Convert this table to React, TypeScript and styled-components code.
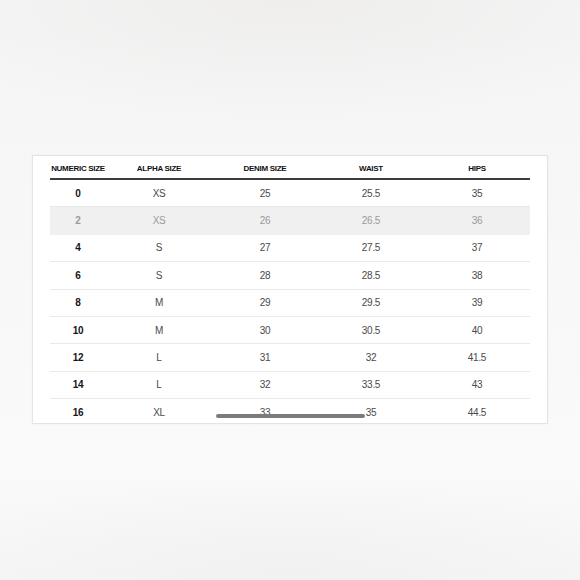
import styled, { createGlobalStyle } from "styled-components";

const GlobalStyle = createGlobalStyle`
    html, body {
        margin: 0;
        padding: 0;
    }
    body {
        font-family: "Liberation Sans", Arial, sans-serif;
        background: #f7f7f7;
    }
`;

const Page = styled.div`
    width: 580px;
    height: 580px;
    box-sizing: border-box;
    padding: 155px 0 0 32px;
    background:
        radial-gradient(ellipse 70% 22% at 50% 0%, #efeeed 0%, rgba(247, 247, 247, 0) 100%),
        radial-gradient(ellipse 70% 18% at 50% 100%, #f1f1f1 0%, rgba(250, 250, 250, 0) 100%),
        linear-gradient(180deg, #f5f5f5 0%, #f8f8f8 50%, #fafafa 80%, #f6f6f6 100%);
    overflow: hidden;
`;

const Card = styled.div`
    position: relative;
    width: 516px;
    height: 269px;
    box-sizing: border-box;
    padding: 0 17px 0 17px;
    background: #fff;
    border: 1px solid #e4e4e4;
    box-shadow: 0 0 2px rgba(0, 0, 0, 0.04);
    overflow: hidden;
`;

const Table = styled.div`
    display: grid;
    grid-template-columns: 56px 106px 106px 106px 106px;
    width: 480px;
`;

const HeadCell = styled.div`
    height: 24px;
    box-sizing: border-box;
    padding-top: 2px;
    display: flex;
    align-items: center;
    justify-content: center;
    font-size: 8px;
    font-weight: 700;
    letter-spacing: -0.3px;
    color: #111;
    text-transform: uppercase;
    white-space: nowrap;
    border-bottom: 2px solid #3c3c3c;
`;

const Cell = styled.div<{ $shaded?: boolean; $strong?: boolean }>`
    height: 27.4px;
    box-sizing: border-box;
    display: flex;
    align-items: center;
    justify-content: center;
    font-size: 10px;
    letter-spacing: -0.3px;
    font-weight: ${(p) => (p.$strong ? 700 : 400)};
    color: ${(p) => (p.$shaded ? "#9a9a9a" : p.$strong ? "#161616" : "#4a4a4a")};
    background: ${(p) => (p.$shaded ? "#f0f0f0" : "transparent")};
    border-bottom: 1px solid ${(p) => (p.$shaded ? "#f0f0f0" : "#e9e9e9")};
`;

const ScrollThumb = styled.div`
    position: absolute;
    left: 183px;
    top: 258px;
    width: 149px;
    height: 4px;
    border-radius: 2px;
    background: #7b7b7b;
`;

const headers = ["Numeric Size", "Alpha Size", "Denim Size", "Waist", "Hips"];

const rows = [
    ["0", "XS", "25", "25.5", "35"],
    ["2", "XS", "26", "26.5", "36"],
    ["4", "S", "27", "27.5", "37"],
    ["6", "S", "28", "28.5", "38"],
    ["8", "M", "29", "29.5", "39"],
    ["10", "M", "30", "30.5", "40"],
    ["12", "L", "31", "32", "41.5"],
    ["14", "L", "32", "33.5", "43"],
    ["16", "XL", "33", "35", "44.5"],
];

const App = () => {
    return (
        <Page>
            <GlobalStyle />
            <Card>
                <Table>
                    {headers.map((h) => (
                        <HeadCell key={h}>{h}</HeadCell>
                    ))}
                    {rows.map((row, i) =>
                        row.map((value, j) => (
                            <Cell key={`${i}-${j}`} $shaded={i === 1} $strong={j === 0}>
                                {value}
                            </Cell>
                        ))
                    )}
                </Table>
                <ScrollThumb />
            </Card>
        </Page>
    );
};

export default App;
